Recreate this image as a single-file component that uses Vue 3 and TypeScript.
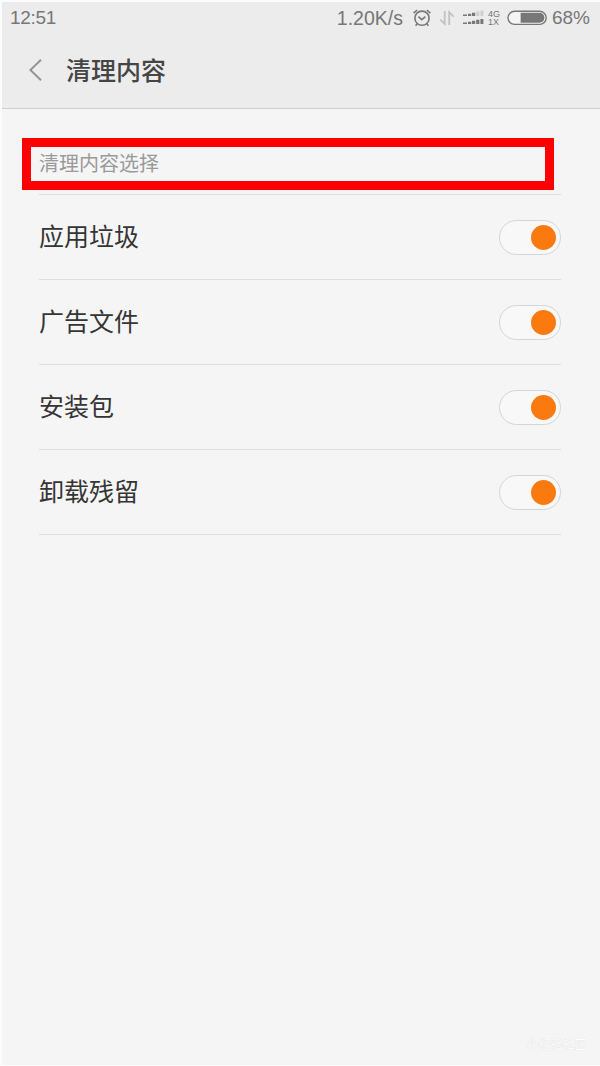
<script setup lang="ts">
import { ref } from 'vue'

interface CleanOption {
  label: string
  enabled: boolean
}

const options = ref<CleanOption[]>([
  { label: '应用垃圾', enabled: true },
  { label: '广告文件', enabled: true },
  { label: '安装包', enabled: true },
  { label: '卸载残留', enabled: true },
])
</script>

<template>
  <div class="screen">
    <header class="top">
      <div class="status">
        <span class="clock">12:51</span>
        <span class="speed">1.20K/s</span>
        <svg class="alarm" width="20" height="20" viewBox="0 0 20 20" fill="none" stroke="#777" stroke-width="1.6">
          <circle cx="10" cy="10.2" r="7.1" />
          <path d="M6.4 8.6 L9.8 11.6 L13.4 8.6" />
          <path d="M1.6 5.2 L5.2 2 M14.8 2 L18.4 5.2" />
          <path d="M5.2 15.8 L3.6 17.8 M14.8 15.8 L16.4 17.8" />
        </svg>
        <svg class="arrows" width="16" height="16" viewBox="0 0 16 16" fill="none" stroke="#c2c2c2" stroke-width="1.8">
          <path d="M5.7 1 V14 L1.2 9.6" />
          <path d="M10.2 15 V2 L14.6 6.6" />
        </svg>
        <svg class="signal" width="22" height="16" viewBox="0 0 22 16" fill="#777">
          <path d="M0 4.5h4v1.6H0z M5 3.8h3.2v2.3H5z M9 2.8h3.2v3.3H9z" />
          <path fill="#d0d0d0" d="M13.2 1.6h3.2v4.5h-3.2z M17.4 .5h3v5.6h-3z" />
          <path d="M0 12.4h4V14H0z M5 11.7h3.2V14H5z M9 10.8h3.2V14H9z M13.2 9.8h3.2V14h-3.2z M17.4 9h3v5h-3z" />
        </svg>
        <span class="network"><span>4G</span><span>1X</span></span>
        <svg class="battery" width="41" height="16" viewBox="0 0 41 16">
          <rect x="1" y="1.2" width="38.2" height="13.2" rx="6.6" fill="#f5f5f5" stroke="#777" stroke-width="1.4" />
          <path d="M13.6 2.8H32.4a5 5 0 0 1 0 10H13.6z" fill="#777" />
        </svg>
        <span class="percent">68%</span>
      </div>
      <div class="titlebar">
        <svg class="back" width="14" height="24" viewBox="0 0 14 24" fill="none" stroke="#929292" stroke-width="1.9">
          <path d="M12 1.8 L1.4 12 L12 22.2" />
        </svg>
        <h1>清理内容</h1>
      </div>
    </header>
    <main class="content">
      <div class="section"><h2>清理内容选择</h2></div>
      <ul>
        <li v-for="option in options" :key="option.label">
          <span>{{ option.label }}</span>
          <button
            class="switch"
            :class="{ on: option.enabled }"
            type="button"
            role="switch"
            :aria-checked="option.enabled"
            :aria-label="option.label"
            @click="option.enabled = !option.enabled"
          >
            <i />
          </button>
        </li>
      </ul>
    </main>
    <footer class="watermark">小经验社区</footer>
  </div>
</template>

<style scoped>
.screen {
  box-sizing: border-box;
  width: 600px;
  height: 1066px;
  display: flex;
  flex-direction: column;
  background: #f5f5f5;
  border-left: 2px solid #fcfcfc;
  border-top: 2px solid #fcfcfc;
  border-bottom: 1px solid #fcfcfc;
  font-family: "Liberation Sans", "Noto Sans CJK SC", sans-serif;
}
.top {
  box-sizing: border-box;
  height: 107px;
  background: #ececec;
  border-bottom: 1px solid #cecece;
}
.status {
  display: flex;
  align-items: center;
  height: 31px;
  padding: 0 10px 0 8px;
  color: #777;
  font-size: 19px;
  line-height: 30px;
  white-space: nowrap;
}
.clock { letter-spacing: -0.3px; }
.speed { margin-left: auto; font-size: 19.5px; }
.alarm { margin-left: 9px; }
.arrows { margin-left: 7px; }
.signal { margin-left: 8px; }
.network {
  display: flex;
  flex-direction: column;
  width: 13px;
  margin-left: 3px;
  font-size: 9px;
  line-height: 8px;
}
.battery { margin-left: 6px; }
.percent { margin-left: 4px; font-size: 19px; }
.titlebar {
  display: flex;
  align-items: center;
  height: 76px;
  padding-left: 27px;
}
.back { margin-bottom: 3px; }
h1 {
  margin: 0 0 1px 23px;
  color: #454545;
  font-size: 25px;
  line-height: 36px;
  font-weight: 500;
}
.content { flex: 1; padding: 29px 39px 0 20px; }
.section {
  box-sizing: border-box;
  width: 532px;
  height: 52px;
  border: 9px solid #fd0000;
  padding-left: 8px;
  display: flex;
  align-items: center;
}
h2 {
  margin: 0;
  color: #9a9a9a;
  font-size: 20px;
  line-height: 30px;
  font-weight: 400;
}
ul {
  list-style: none;
  margin: 4px 0 0 17px;
  padding: 0;
  border-top: 1px solid #dedede;
}
li {
  box-sizing: border-box;
  height: 85px;
  display: flex;
  align-items: center;
  justify-content: space-between;
  border-bottom: 1px solid #dedede;
  color: #353535;
  font-size: 25px;
  line-height: 36px;
}
.switch {
  box-sizing: border-box;
  width: 62px;
  height: 35px;
  border: 1px solid #d5d5d5;
  border-radius: 18px;
  background: #f8f8f8;
  padding: 0 4px;
  display: flex;
  align-items: center;
  justify-content: flex-start;
}
.switch.on { justify-content: flex-end; }
.switch i {
  width: 25px;
  height: 25px;
  border-radius: 50%;
  background: #c9c9c9;
}
.switch.on i { background: #fa7a10; }
.watermark {
  align-self: flex-end;
  margin: 0 13px 11px 0;
  color: #fff;
  font-size: 12px;
  line-height: 18px;
  text-shadow: 0 0 1px #ccc;
}
</style>
